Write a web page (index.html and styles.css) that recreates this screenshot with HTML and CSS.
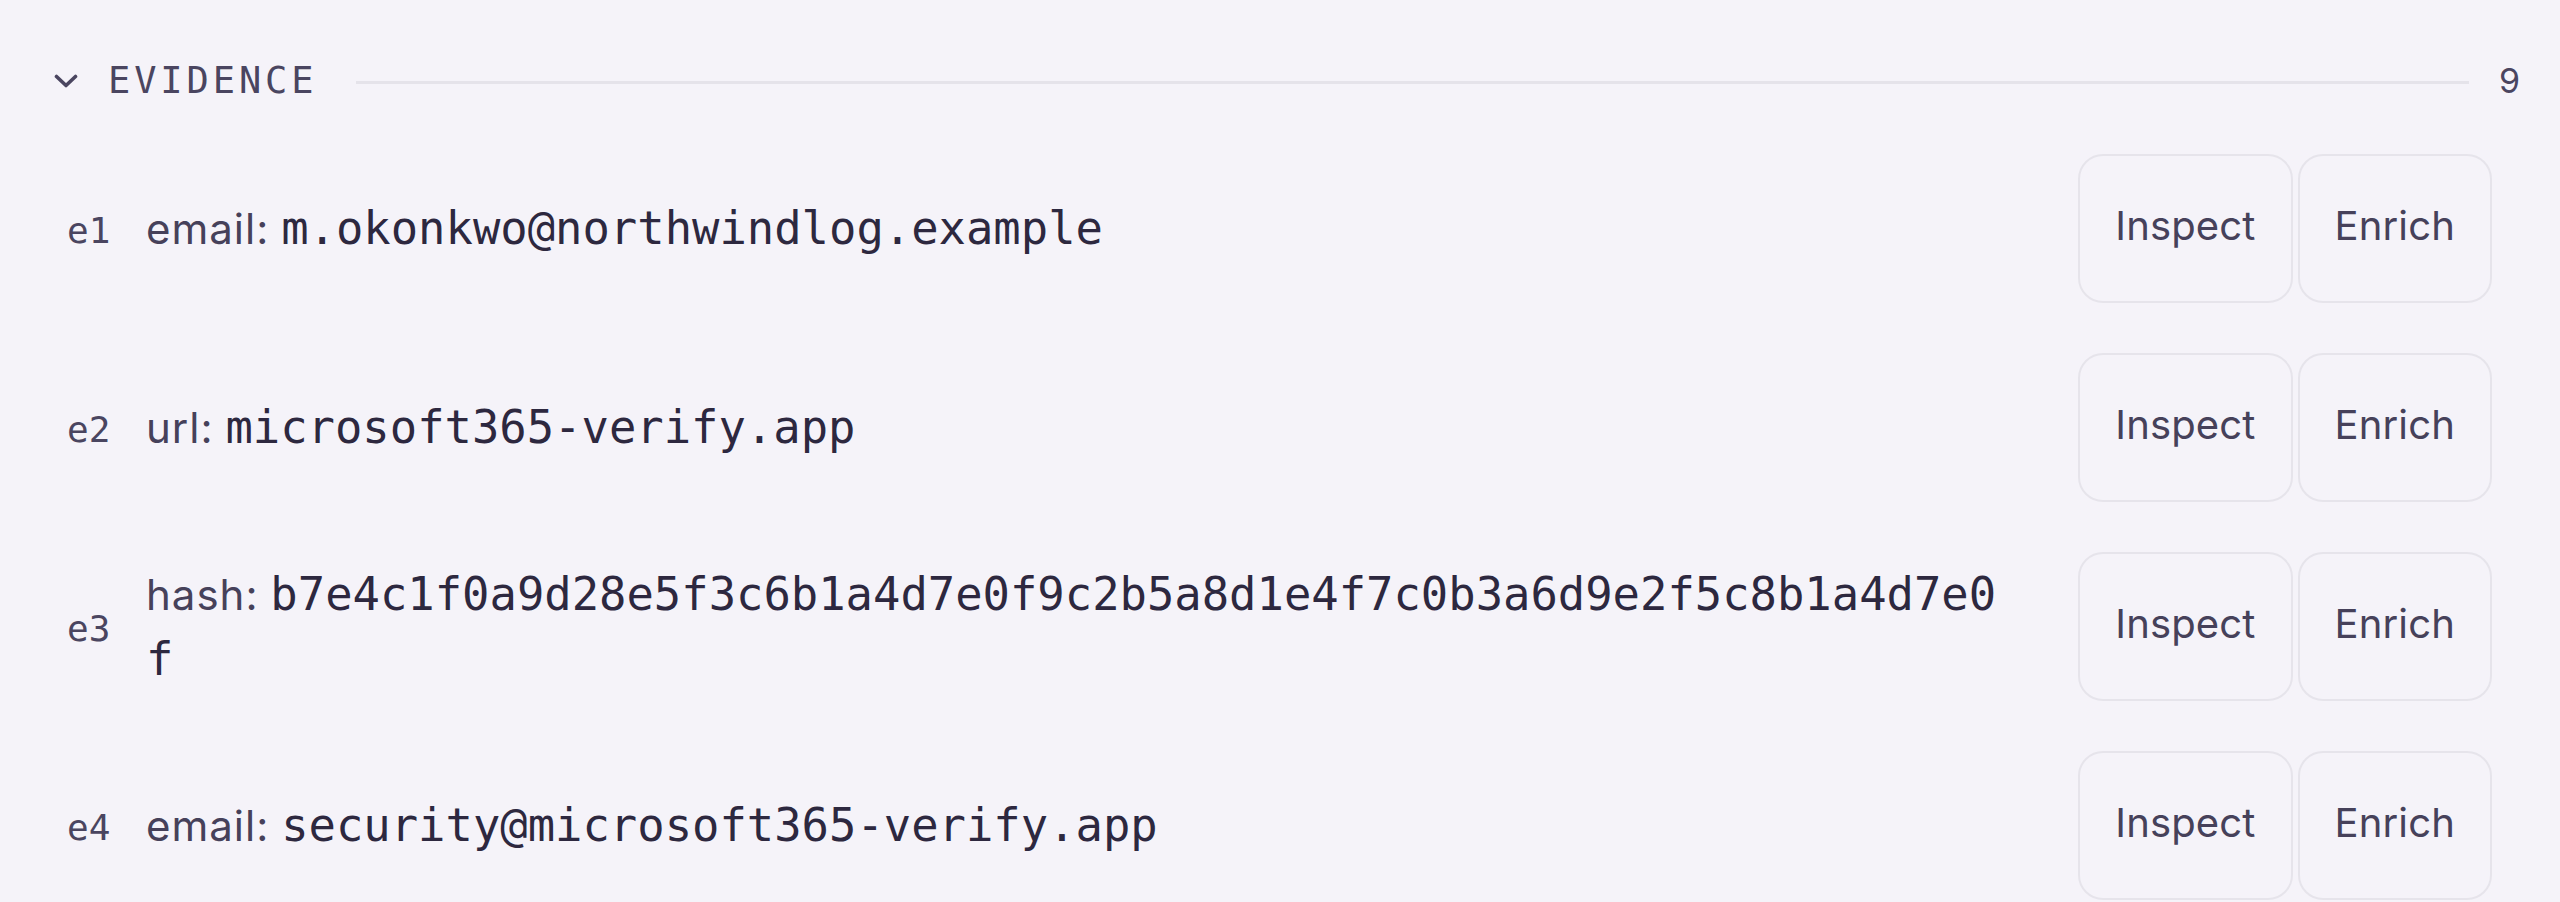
FILE: index.html
```html
<!DOCTYPE html>
<html lang="en">
<head>
<meta charset="utf-8">
<title>Evidence</title>
<link rel="stylesheet" href="styles.css">
</head>
<body>
<section class="section">
  <div class="header">
    <svg class="chev" width="24" height="14" viewBox="0 0 24 14" aria-hidden="true"><path d="M2.5 2.5 L12 11.5 L21.5 2.5" fill="none" stroke="currentColor" stroke-width="3.6" stroke-linecap="round" stroke-linejoin="round"/></svg>
    <span class="title">EVIDENCE</span>
    <span class="rule"></span>
    <span class="count">9</span>
  </div>
  <div class="list">
    <div class="row">
      <span class="eid">e1</span>
      <div class="text"><span class="kind">email:</span> <span class="val">m.okonkwo@northwindlog.example</span></div>
      <div class="actions"><button class="btn">Inspect</button><button class="btn">Enrich</button></div>
    </div>
    <div class="row">
      <span class="eid">e2</span>
      <div class="text"><span class="kind">url:</span> <span class="val">microsoft365-verify.app</span></div>
      <div class="actions"><button class="btn">Inspect</button><button class="btn">Enrich</button></div>
    </div>
    <div class="row">
      <span class="eid">e3</span>
      <div class="text"><span class="kind">hash:</span> <span class="val">b7e4c1f0a9d28e5f3c6b1a4d7e0f9c2b5a8d1e4f7c0b3a6d9e2f5c8b1a4d7e0f</span></div>
      <div class="actions"><button class="btn">Inspect</button><button class="btn">Enrich</button></div>
    </div>
    <div class="row">
      <span class="eid">e4</span>
      <div class="text"><span class="kind">email:</span> <span class="val">security@microsoft365-verify.app</span></div>
      <div class="actions"><button class="btn">Inspect</button><button class="btn">Enrich</button></div>
    </div>
  </div>
</section>
</body>
</html>
```
FILE: styles.css
```css
html, body {
  margin: 0;
  padding: 0;
  background: #f5f3f9;
}
body {
  font-family: Inter, "Noto Sans", sans-serif;
  color: #46415a;
  overflow: hidden;
}
.section {
  padding: 50px 38px 0 54px;
}
.header {
  display: flex;
  align-items: center;
  height: 60px;
  gap: 30px;
}
.chev {
  color: #4a4560;
  flex: 0 0 auto;
  margin-top: 2px;
}
.title {
  font-family: "DejaVu Sans Mono", "Liberation Mono", monospace;
  font-size: 37px;
  letter-spacing: 3.9px;
  color: #4a4560;
}
.rule {
  flex: 1;
  height: 3px;
  background: #e5e3ea;
  margin-top: 4px;
  margin-left: 9px;
}
.count {
  font-size: 34px;
  color: #4a4560;
  padding-right: 2px;
}
.list {
  margin-top: 44px;
  display: flex;
  flex-direction: column;
  gap: 50px;
}
.row {
  display: flex;
  align-items: center;
  padding: 0 30px 0 13px;
  min-height: 149px;
}
.eid {
  flex: 0 0 79px;
  font-family: "DejaVu Sans Mono", "Liberation Mono", monospace;
  font-size: 36px;
  color: #4a4560;
  padding-top: 4px;
}
.text {
  flex: 1;
  min-width: 0;
  font-size: 42px;
  line-height: 65px;
  word-break: break-all;
  color: #46415a;
}
.kind {
  letter-spacing: 1px;
}
.val {
  font-family: "DejaVu Sans Mono", "Liberation Mono", monospace;
  font-size: 45.5px;
  color: #2d283f;
}
.actions {
  flex: 0 0 auto;
  display: flex;
  gap: 5px;
  margin-left: 70px;
}
.btn {
  height: 149px;
  padding: 0 35px 6px;
  border: 2.5px solid #e6e4eb;
  border-radius: 25px;
  background: transparent;
  font-family: Inter, "Noto Sans", sans-serif;
  font-size: 40px;
  letter-spacing: 0.15px;
  color: #46415a;
  cursor: pointer;
}
```
